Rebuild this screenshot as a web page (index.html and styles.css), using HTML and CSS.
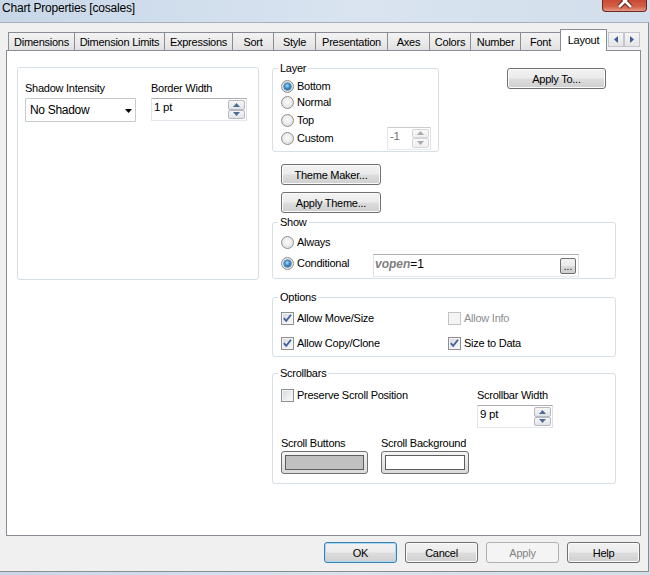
FILE: index.html
```html
<!DOCTYPE html>
<html>
<head>
<meta charset="utf-8">
<link rel="stylesheet" href="styles.css">
</head>
<body>
<div class="window">
  <div class="titlebar">
    <span class="title">Chart Properties [cosales]</span>
    <div class="close">
      <svg width="45" height="11" viewBox="0 0 45 11">
        <path d="M17 -5 L29 7 M29 -5 L17 7" stroke="#6a2517" stroke-width="4.6" fill="none"/>
        <path d="M17 -5 L29 7 M29 -5 L17 7" stroke="#ffffff" stroke-width="2.6" fill="none"/>
      </svg>
    </div>
  </div>
  <div class="client">
    <div class="tabs">
      <div class="tab">Dimensions</div>
      <div class="tab">Dimension Limits</div>
      <div class="tab">Expressions</div>
      <div class="tab">Sort</div>
      <div class="tab">Style</div>
      <div class="tab">Presentation</div>
      <div class="tab">Axes</div>
      <div class="tab">Colors</div>
      <div class="tab">Number</div>
      <div class="tab">Font</div>
      <div class="tab active">Layout</div>
      <div class="tabscroll">
        <span class="tsbtn"><svg width="4" height="7" viewBox="0 0 4 7"><path d="M4 0 L0 3.5 L4 7Z" fill="#3b5d9c"/></svg></span>
        <span class="tsbtn"><svg width="4" height="7" viewBox="0 0 4 7"><path d="M0 0 L4 3.5 L0 7Z" fill="#3b5d9c"/></svg></span>
      </div>
    </div>

    <div class="panel">
      <div class="leftcol">
        <div class="box">
          <div class="field drop-field">
            <div class="lbl">Shadow Intensity</div>
            <div class="combo">
              <span class="combo-val">No Shadow</span>
              <svg class="combo-arrow" width="7" height="4" viewBox="0 0 7 4"><path d="M0 0 L7 0 L3.5 4Z" fill="#000"/></svg>
            </div>
          </div>
          <div class="field spin-field">
            <div class="lbl">Border Width</div>
            <div class="spin bw">
              <span class="spin-val">1 pt</span>
              <span class="spin-btns">
                <span class="sbtn"><svg width="7" height="4" viewBox="0 0 7 4"><path d="M0 4 L3.5 0 L7 4Z" fill="#4d6a9c"/></svg></span>
                <span class="sbtn"><svg width="7" height="4" viewBox="0 0 7 4"><path d="M0 0 L7 0 L3.5 4Z" fill="#4d6a9c"/></svg></span>
              </span>
            </div>
          </div>
        </div>
      </div>

      <div class="rightcol">
        <div class="toprow">
          <fieldset class="group layer">
            <legend>Layer</legend>
            <div class="opt"><span class="rad on"></span>Bottom</div>
            <div class="opt"><span class="rad"></span>Normal</div>
            <div class="opt sp2"><span class="rad"></span>Top</div>
            <div class="opt sp2">
              <span class="rad"></span>Custom
              <div class="spin custom disabled">
                <span class="spin-val">-1</span>
                <span class="spin-btns">
                  <span class="sbtn"><svg width="7" height="4" viewBox="0 0 7 4"><path d="M0 4 L3.5 0 L7 4Z" fill="#a9a9a9"/></svg></span>
                  <span class="sbtn"><svg width="7" height="4" viewBox="0 0 7 4"><path d="M0 0 L7 0 L3.5 4Z" fill="#a9a9a9"/></svg></span>
                </span>
              </div>
            </div>
          </fieldset>
          <button class="btn applyto">Apply To...</button>
        </div>

        <button class="btn theme">Theme Maker...</button>
        <button class="btn theme second">Apply Theme...</button>

        <fieldset class="group wide show">
          <legend>Show</legend>
          <div class="opt"><span class="rad"></span>Always</div>
          <div class="cond-row">
            <div class="opt cond-lbl"><span class="rad on"></span>Conditional</div>
            <div class="exprbox">
              <span class="expr"><b><i>vopen</i></b>=1</span>
              <span class="dots">...</span>
            </div>
          </div>
        </fieldset>

        <fieldset class="group wide options">
          <legend>Options</legend>
          <div class="optgrid">
            <div class="opt"><span class="chk"><svg width="11" height="11" viewBox="0 0 11 11"><path d="M1.8 5.2 L4.2 7.8 L9 1.8" stroke="#3f5f9e" stroke-width="1.8" fill="none"/></svg></span>Allow Move/Size</div>
            <div class="opt dis"><span class="chk"></span>Allow Info</div>
            <div class="opt"><span class="chk"><svg width="11" height="11" viewBox="0 0 11 11"><path d="M1.8 5.2 L4.2 7.8 L9 1.8" stroke="#3f5f9e" stroke-width="1.8" fill="none"/></svg></span>Allow Copy/Clone</div>
            <div class="opt"><span class="chk"><svg width="11" height="11" viewBox="0 0 11 11"><path d="M1.8 5.2 L4.2 7.8 L9 1.8" stroke="#3f5f9e" stroke-width="1.8" fill="none"/></svg></span>Size to Data</div>
          </div>
        </fieldset>

        <fieldset class="group wide scrollbars">
          <legend>Scrollbars</legend>
          <div class="sb-top">
            <div class="opt preserve"><span class="chk"></span>Preserve Scroll Position</div>
            <div class="sbw">
              <div class="lbl16">Scrollbar Width</div>
              <div class="spin sw">
                <span class="spin-val">9 pt</span>
                <span class="spin-btns">
                  <span class="sbtn"><svg width="7" height="4" viewBox="0 0 7 4"><path d="M0 4 L3.5 0 L7 4Z" fill="#4d6a9c"/></svg></span>
                  <span class="sbtn"><svg width="7" height="4" viewBox="0 0 7 4"><path d="M0 0 L7 0 L3.5 4Z" fill="#4d6a9c"/></svg></span>
                </span>
              </div>
            </div>
          </div>
          <div class="sb-bottom">
            <div class="colfield first">
              <div class="lbl">Scroll Buttons</div>
              <div class="swatch"><i class="grey"></i></div>
            </div>
            <div class="colfield">
              <div class="lbl">Scroll Background</div>
              <div class="swatch wide2"><i class="white"></i></div>
            </div>
          </div>
        </fieldset>
      </div>
    </div>

    <div class="actions">
      <button class="btn act default">OK</button>
      <button class="btn act">Cancel</button>
      <button class="btn act disabled">Apply</button>
      <button class="btn act">Help</button>
    </div>
  </div>
</div>
</body>
</html>
```

FILE: styles.css
```css
* { box-sizing: border-box; }

body {
  margin: 0;
  width: 650px;
  height: 575px;
  overflow: hidden;
  font-family: "Liberation Sans", Arial, sans-serif;
  font-size: 11px;
  letter-spacing: -0.25px;
  color: #000;
  background: #dde7f2;
}

.window {
  width: 650px;
  height: 575px;
  display: flex;
  flex-direction: column;
  background: linear-gradient(to right, #c8d7e8 0%, #d9e4f0 55%, #d2deeb 100%);
}

/* title bar */
.titlebar {
  height: 22px;
  flex: none;
  display: flex;
  align-items: flex-start;
  padding-left: 2px;
}
.title {
  font-size: 12px;
  letter-spacing: -0.2px;
  line-height: 17px;
}
.close {
  margin-left: auto;
  margin-right: 3px;
  width: 45px;
  height: 12px;
  border: 1px solid #6e2a1c;
  border-top: none;
  border-radius: 0 0 4px 4px;
  background: linear-gradient(#c94a33 0%, #d4604a 60%, #e59a86 100%);
  overflow: hidden;
}
.close svg { display: block; margin-left: -1px; }

/* client area */
.client {
  width: 649px;
  height: 550px;
  flex: none;
  background: #f0f0f0;
  border-top: 1px solid #a6b0bd;
  border-right: 1px solid #8d8d8d;
  border-bottom: 1px solid #8d8d8d;
  display: flex;
  flex-direction: column;
}

/* tabs */
.tabs {
  display: grid;
  grid-template-columns: 66px 90px 68px 41px 42px 72px 42px 41px 50px 40px 48px 32px;
  height: 21px;
  margin-top: 6px;
  padding-left: 8px;
  align-items: end;
}
.tab {
  height: 18px;
  border: 1px solid #898c95;
  border-right: none;
  border-bottom: none;
  background: linear-gradient(#f3f3f3 0%, #ebebeb 50%, #e1e1e1 100%);
  display: flex;
  align-items: center;
  justify-content: center;
  line-height: 16px;
  white-space: nowrap;
}
.tab.active {
  width: 47px;
  height: 22px;
  margin-bottom: -1px;
  border-right: 1px solid #898c95;
  background: #fff;
  position: relative;
  z-index: 2;
  padding-bottom: 2px;
}
.tabscroll {
  align-self: start;
  margin-top: 3px;
  display: flex;
  gap: 0;
}
.tsbtn {
  width: 16px;
  height: 15px;
  border: 1px solid #c3c6cc;
  background: linear-gradient(#f7f7f7, #e4e4e4);
  display: flex;
  align-items: center;
  justify-content: center;
}

/* panel */
.panel {
  margin-left: 6px;
  width: 635px;
  height: 486px;
  flex: none;
  border: 1px solid #898c95;
  background: #fff;
  display: flex;
  align-items: flex-start;
  padding-left: 10px;
}

.leftcol { margin-top: 16px; }
.box {
  width: 242px;
  height: 213px;
  border: 1px solid #d5dfe5;
  border-radius: 3px;
  padding: 13px 0 0 7px;
  display: flex;
  gap: 15px;
}
.field { display: flex; flex-direction: column; }
.drop-field { width: 111px; }
.spin-field { width: 96px; }
.lbl {
  line-height: 14px;
  margin-bottom: 3px;
  white-space: nowrap;
}
.lbl16 { line-height: 16px; white-space: nowrap; }

.combo {
  height: 24px;
  border: 1px solid #c6c9ce;
  border-radius: 1px;
  background: #fff;
  display: flex;
  align-items: center;
  padding-left: 4px;
  padding-right: 3px;
  font-size: 12px;
  letter-spacing: -0.3px;
}
.combo-val { flex: 1; }
.combo-arrow { margin-top: 1px; }

/* spin box */
.spin {
  height: 23px;
  display: flex;
  border: 1px solid;
  border-color: #abadb3 #dbdfe6 #e3e9ef #e2e3ea;
  background: #fff;
  padding: 1px;
}
.spin-val {
  flex: 1;
  padding-left: 1px;
  line-height: 15px;
  font-size: 11.5px;
}
.spin-btns {
  width: 17px;
  display: flex;
  flex-direction: column;
}
.sbtn {
  flex: 1;
  border: 1px solid #b6b9bf;
  border-radius: 2px;
  background: linear-gradient(#f6f6f6, #e2e3e6);
  display: flex;
  align-items: center;
  justify-content: center;
}
.spin.bw { width: 96px; }
.spin.custom {
  width: 44px;
  margin-left: auto;
  border-color: #c9cbcf #e1e3e6 #e6e8eb #e4e6e9;
}
.spin.disabled .spin-val { color: #6d6d6d; }
.spin.disabled .sbtn {
  border-color: #d3d5d9;
  background: linear-gradient(#f9f9f9, #efefef);
}
.spin.sw { width: 76px; margin-top: 2px; }

/* right column */
.rightcol {
  margin-left: 13px;
  width: 344px;
  display: flex;
  flex-direction: column;
  align-items: flex-start;
}
.toprow {
  margin-top: 10px;
  width: 344px;
  display: flex;
  align-items: flex-start;
}

.group {
  margin: 0;
  min-width: 0;
  border: 1px solid #d5dfe5;
  border-radius: 3px;
}
.group legend {
  padding: 0 2px;
  margin-left: -3px;
  line-height: 14px;
}

.opt {
  display: flex;
  align-items: center;
  height: 16px;
  white-space: nowrap;
}
.opt.sp2 { margin-top: 2px; }

.group.layer {
  width: 167px;
  padding: 3px 7px 5px 8px;
}

.rad {
  width: 13px;
  height: 13px;
  flex: none;
  border-radius: 50%;
  border: 1px solid #8e8f8f;
  background: radial-gradient(circle at 50% 45%, #fcfcfc 0%, #e9e9e9 55%, #d4d4d4 100%);
  margin-right: 3px;
  position: relative;
}
.rad.on::after {
  content: "";
  position: absolute;
  left: 2px;
  top: 2px;
  width: 7px;
  height: 7px;
  border-radius: 50%;
  background: radial-gradient(circle at 45% 40%, #a7e0fb 0%, #3a8cc9 45%, #16497f 100%);
  box-shadow: 0 0 0 0.5px #1b4f82;
}

.chk {
  width: 13px;
  height: 13px;
  flex: none;
  border: 1px solid #8e8f8f;
  background: linear-gradient(135deg, #d3d6db 0%, #eeeeee 60%, #fbfbfb 100%);
  box-shadow: inset 0 0 0 1px #f4f4f4;
  margin-right: 3px;
  display: flex;
  align-items: center;
  justify-content: center;
}
.opt.dis { color: #8d8d8d; }
.opt.dis .chk {
  border-color: #c4c4c4;
  background: #f4f4f4;
}

/* buttons */
.btn {
  font: inherit;
  letter-spacing: inherit;
  color: #000;
  height: 21px;
  padding: 0;
  border: 1px solid #707070;
  border-radius: 3px;
  background: linear-gradient(#f2f2f2 0%, #ebebeb 48%, #dddddd 52%, #cfcfcf 100%);
  box-shadow: inset 0 0 0 1px #fbfbfb;
  display: flex;
  align-items: center;
  justify-content: center;
  white-space: nowrap;
}
.applyto {
  width: 99px;
  margin-left: auto;
  margin-right: 10px;
  margin-top: 7px;
}
.theme {
  width: 100px;
  margin-left: 9px;
  margin-top: 12px;
}
.theme.second { margin-top: 7px; }

.group.show {
  width: 344px;
  margin-top: 2px;
  padding: 5px 8px 1px 8px;
}
.cond-row {
  display: flex;
  align-items: flex-start;
  margin-top: 4px;
  height: 23px;
}
.cond-lbl {
  width: 92px;
  margin-top: 1px;
}
.exprbox {
  width: 206px;
  height: 23px;
  border: 1px solid;
  border-color: #abadb3 #dbdfe6 #e3e9ef #e2e3ea;
  background: #fff;
  display: flex;
  align-items: flex-start;
  padding: 1px 2px 0 1px;
}
.expr {
  font-size: 12px;
  letter-spacing: 0;
  line-height: 17px;
}
.expr b { color: #7f7f7f; }
.dots {
  margin-left: auto;
  margin-top: 2px;
  width: 16px;
  height: 16px;
  border: 1px solid #707070;
  border-radius: 2px;
  background: linear-gradient(#f2f2f2 0%, #ebebeb 48%, #dddddd 52%, #cfcfcf 100%);
  font-size: 10px;
  line-height: 16px;
  text-align: center;
  letter-spacing: 0;
}

.group.options {
  width: 344px;
  margin-top: 11px;
  padding: 6px 8px 5px 8px;
}
.optgrid {
  display: grid;
  grid-template-columns: 167px auto;
  row-gap: 9px;
}

.group.scrollbars {
  width: 344px;
  margin-top: 9px;
  padding: 7px 8px 9px 8px;
}
.sb-top { display: flex; }
.preserve { width: 196px; }
.sbw { display: flex; flex-direction: column; }
.sb-bottom {
  display: flex;
  margin-top: 8px;
}
.colfield { display: flex; flex-direction: column; }
.colfield.first { width: 100px; }
.colfield .lbl { margin-bottom: 1px; }
.swatch {
  width: 87px;
  height: 23px;
  border: 1px solid #707070;
  border-radius: 3px;
  padding: 3px;
  background: linear-gradient(#f3f3f3, #dadada);
}
.swatch.wide2 { width: 88px; }
.swatch i {
  display: block;
  height: 100%;
  border: 1px solid #5c5c5c;
}
.swatch i.grey { background: #c0c0c0; }
.swatch i.white { background: #fff; }

/* bottom buttons */
.actions {
  display: flex;
  justify-content: flex-end;
  gap: 8px;
  padding-right: 8px;
  margin-top: 6px;
}
.act { width: 73px; }
.act.default {
  border-color: #3c7fb1;
  box-shadow: inset 0 0 0 1px #a9dbf6;
}
.act.disabled {
  border-color: #adb2b5;
  background: #f4f4f4;
  box-shadow: none;
  color: #838383;
}
```
